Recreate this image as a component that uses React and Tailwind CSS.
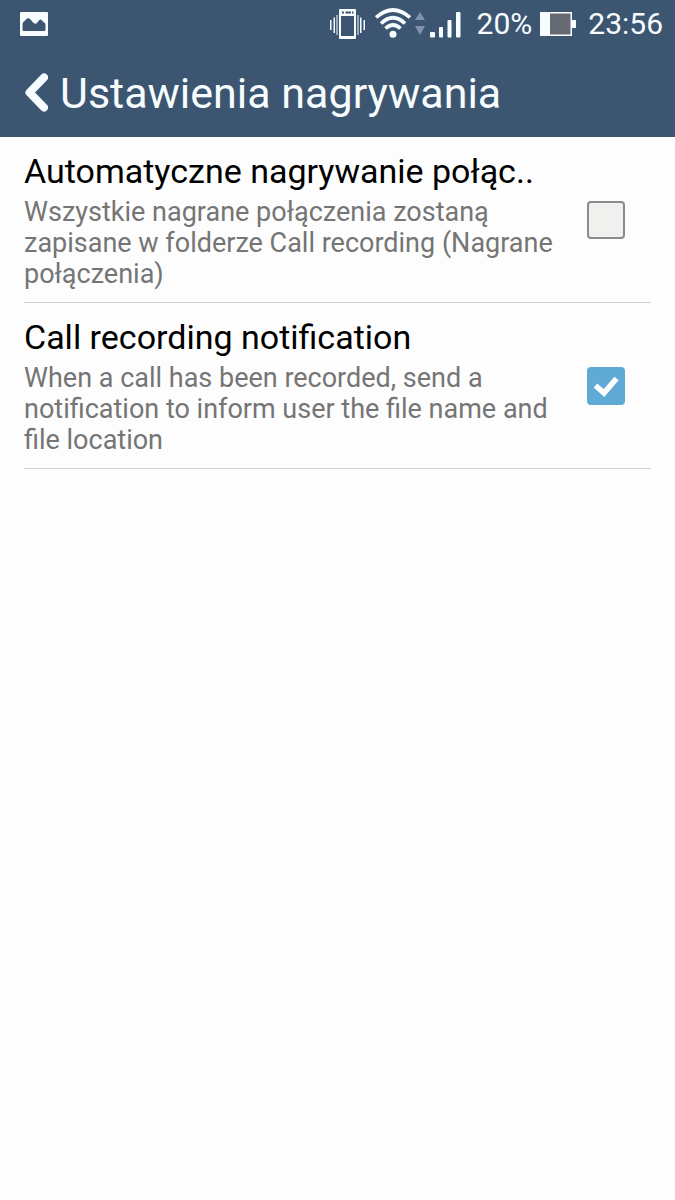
import { useState } from "react";

const SETTINGS = [
  {
    id: "auto-record",
    title: "Automatyczne nagrywanie połąc..",
    summary:
      "Wszystkie nagrane połączenia zostaną zapisane w folderze Call recording (Nagrane połączenia)",
    enabled: false,
  },
  {
    id: "record-notification",
    title: "Call recording notification",
    summary:
      "When a call has been recorded, send a notification to inform user the file name and file location",
    enabled: true,
  },
];

function PictureIcon() {
  return (
    <svg className="h-6 w-7" viewBox="0 0 28 24" aria-hidden="true">
      <path
        fill="currentColor"
        fillRule="evenodd"
        d="M1 0H27Q28 0 28 1V23Q28 24 27 24H1Q0 24 0 23V1Q0 0 1 0ZM2.500 17.500Q2.500 19 4 19H24Q25.500 19 25.500 17.500V13C25.500 10.500 23.500 10.500 22 8.500Q20.500 6.500 19 8.500L16.500 11.500H14L10.500 7.500Q8 5 6 7.500C4.500 9.500 2.500 10 2.500 12.500Z"
      />
    </svg>
  );
}

function VibrateIcon() {
  return (
    <svg className="h-8 w-9" viewBox="0 0 36 32" aria-hidden="true">
      <g fill="currentColor">
        <path
          fillRule="evenodd"
          d="M11 1H26Q27 1 27 2V30Q27 31 26 31H11Q10 31 10 30V2Q10 1 11 1ZM12 8V28H25V8ZM13 3.500V5.500H15V3.500ZM16.500 3.500V5.500H22V3.500ZM23 3.500V5.500H24.500V3.500Z"
        />
        <path d="M1 12H2.500V22H1ZM4.500 9.500H6V25H4.500ZM31 9.500H32.500V25H31ZM34.500 12H36V22H34.500ZM7.500 7H8.500V27H7.500ZM28.500 7H29.500V27H28.500Z" />
      </g>
    </svg>
  );
}

function WifiIcon() {
  return (
    <svg className="h-8 w-9" viewBox="0 0 36 32" aria-hidden="true">
      <g fill="none" stroke="currentColor" strokeWidth="3.600">
        <path d="M1 9.500Q18 -5.500 35 9.500" />
        <path d="M6 15.500Q18 4 30 15.500" />
        <path d="M10.500 20.500Q18 13.500 25.500 20.500" />
      </g>
      <circle cx="18" cy="26.300" r="3.500" fill="currentColor" />
    </svg>
  );
}

function DataArrowsIcon() {
  return (
    <svg className="h-6 w-3 text-[#8093aa]" viewBox="0 0 12 24" aria-hidden="true">
      <path fill="currentColor" d="M7 0L12 8H2ZM2 14H12L7 23Z" />
    </svg>
  );
}

function SignalIcon() {
  return (
    <svg className="h-7 w-8" viewBox="0 0 32 28" aria-hidden="true">
      <g fill="currentColor">
        <rect x="1" y="22" width="5" height="5.500" rx="1" />
        <rect x="10" y="17" width="4" height="10.500" rx="1" />
        <rect x="18.500" y="10" width="4" height="17.500" rx="1" />
        <rect x="27" y="2" width="4.500" height="25.500" rx="1" />
      </g>
    </svg>
  );
}

function BatteryIcon() {
  return (
    <svg className="h-6 w-9" viewBox="0 0 36 24" aria-hidden="true">
      <path fill="currentColor" d="M0 0H32V8H36V16H32V24H0Z" />
      <path fill="#666b73" d="M10 1.500H30.500V22.500H10Z" />
    </svg>
  );
}

function StatusBar() {
  return (
    <div className="flex h-12 items-center justify-between pr-3 pl-5">
      <PictureIcon />
      <div className="flex items-center text-3xl">
        <VibrateIcon />
        <span className="ml-2.5">
          <WifiIcon />
        </span>
        <span className="ml-0.5">
          <DataArrowsIcon />
        </span>
        <span className="ml-1">
          <SignalIcon />
        </span>
        <span className="ml-4">20%</span>
        <span className="ml-2">
          <BatteryIcon />
        </span>
        <time className="ml-3">23:56</time>
      </div>
    </div>
  );
}

function SettingRow({ id, title, summary, enabled }) {
  const [checked, setChecked] = useState(enabled);
  return (
    <li className="flex items-center border-b border-[#d2d2d2] py-3 pr-[26px]">
      <label htmlFor={id} className="flex-1 pr-6">
        <span className="block text-[34px] leading-[44px] whitespace-nowrap text-black">
          {title}
        </span>
        <span className="mt-1 block text-[27px] leading-[31px] text-[#757575]">
          {summary}
        </span>
      </label>
      <span className="relative size-[38px] shrink-0">
        <input
          id={id}
          type="checkbox"
          checked={checked}
          onChange={(event) => setChecked(event.target.checked)}
          className="block size-full appearance-none rounded border-2 border-[#8b8b8b] bg-[#f0f0ee] checked:border-[#5fabd5] checked:bg-[#5fabd5]"
        />
        {checked && (
          <svg
            className="pointer-events-none absolute inset-0 size-full"
            viewBox="0 0 38 38"
            aria-hidden="true"
          >
            <path
              d="M8.500 18.500L17 26L29.500 11.500"
              fill="none"
              stroke="#fff"
              strokeWidth="5.500"
            />
          </svg>
        )}
      </span>
    </li>
  );
}

export default function App() {
  return (
    <div className="min-h-screen bg-[#fdfdfd] font-[Roboto,sans-serif]">
      <header className="bg-[#3c5672] text-[#f7fcff]">
        <StatusBar />
        <div className="flex h-[89px] items-center gap-3 px-6">
          <button type="button" aria-label="Wstecz">
            <svg className="h-10 w-6" viewBox="0 0 24 40" aria-hidden="true">
              <path
                d="M20 4.500L5.500 19.500L20 34.500"
                fill="none"
                stroke="currentColor"
                strokeWidth="8"
                strokeLinecap="round"
                strokeLinejoin="round"
              />
            </svg>
          </button>
          <h1 className="text-[43px] leading-[52px]">Ustawienia nagrywania</h1>
        </div>
      </header>
      <main>
        <ul className="px-6">
          {SETTINGS.map((setting) => (
            <SettingRow key={setting.id} {...setting} />
          ))}
        </ul>
      </main>
    </div>
  );
}
